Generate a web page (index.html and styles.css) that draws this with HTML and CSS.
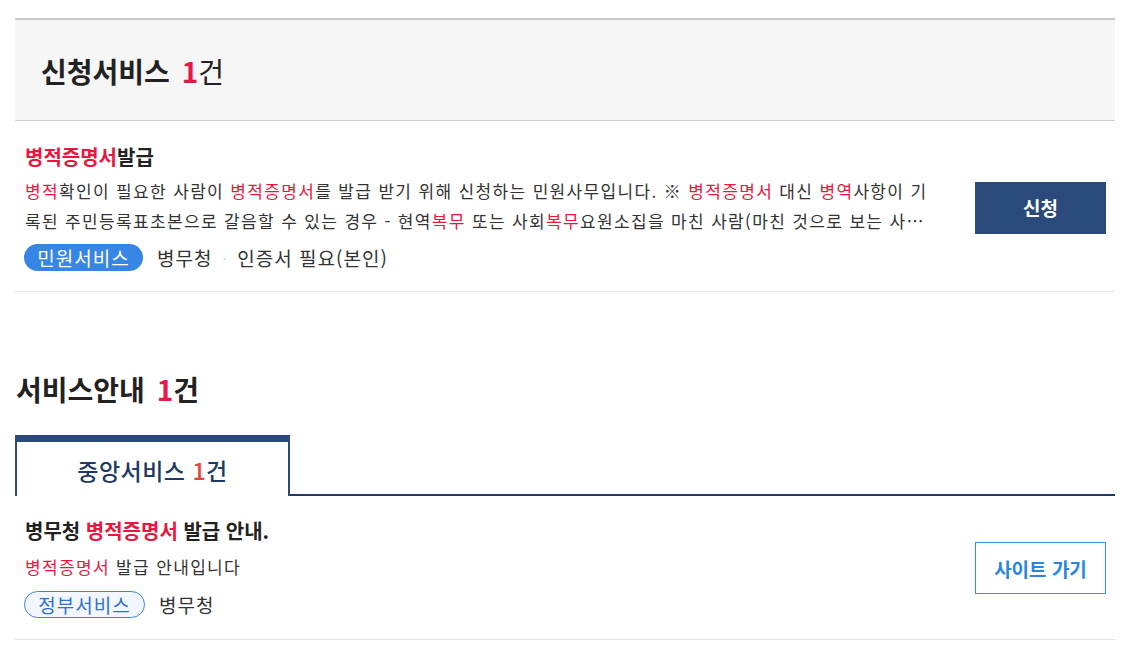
FILE: index.html
```html
<!DOCTYPE html>
<html lang="ko">
<head>
<meta charset="utf-8">
<link rel="stylesheet" href="styles.css">
</head>
<body>
<div class="page">
  <section class="apply">
    <div class="apply-head">
      <h2 class="apply-title">신청서비스 <em class="count">1</em><span class="unit">건</span></h2>
    </div>
    <div class="item">
      <div class="info">
        <h3 class="item-title"><span class="hl">병적증명서</span>발급</h3>
        <p class="desc"><span class="hl">병적</span>확인이 필요한 사람이 <span class="hl">병적증명서</span>를 발급 받기 위해 신청하는 민원사무입니다. ※ <span class="hl">병적증명서</span> 대신 <span class="hl">병역</span>사항이 기록된 주민등록표초본으로 갈음할 수 있는 경우 - 현역<span class="hl">복무</span> 또는 사회<span class="hl">복무</span>요원소집을 마친 사람(마친 것으로 보는 사람을 포함한다) - 병역면제 처분을 받은 사람</p>
        <div class="tags">
          <span class="pill pill-solid">민원서비스</span>
          <span class="tag-text">병무청</span>
          <span class="sep">·</span>
          <span class="tag-text">인증서 필요(본인)</span>
        </div>
      </div>
      <a class="btn btn-solid">신청</a>
    </div>
  </section>

  <section class="guide">
    <h2 class="guide-title">서비스안내 <em class="count">1</em>건</h2>
    <div class="tabs">
      <div class="tab"><span class="tab-label">중앙서비스 <em class="tab-count">1</em>건</span></div>
    </div>
    <div class="item item-guide">
      <div class="info">
        <h3 class="item-title">병무청 <span class="hl">병적증명서</span> 발급 안내.</h3>
        <p class="desc"><span class="hl">병적증명서</span> 발급 안내입니다</p>
        <div class="tags">
          <span class="pill pill-line">정부서비스</span>
          <span class="tag-text">병무청</span>
        </div>
      </div>
      <a class="btn btn-line">사이트 가기</a>
    </div>
  </section>
</div>
</body>
</html>
```

FILE: styles.css
```css
* { box-sizing: border-box; }
html, body {
  margin: 0;
  padding: 0;
  background: #fff;
}
body {
  font-family: "Noto Sans CJK KR", "Noto Sans", sans-serif;
  color: #333;
}
.page {
  width: 1100px;
  margin-left: 15px;
  padding-top: 18px;
}
h2, h3, p { margin: 0; }
em { font-style: normal; }

.apply-head {
  background: #f6f6f6;
  border-top: 2px solid #c8c8c8;
  border-bottom: 1px solid #cfcfcf;
  height: 103px;
  display: flex;
  align-items: center;
  padding-left: 26px;
}
.apply-title {
  font-size: 28px;
  font-weight: 700;
  color: #222;
  line-height: 34px;
  padding-top: 2px;
}
.count {
  color: #e8174a;
  font-weight: 700;
  margin-left: 4px;
}
.unit { font-weight: 400; }

.item {
  display: flex;
  align-items: center;
  gap: 42px;
  padding: 23px 9px 20px 10px;
  border-bottom: 1px solid #e4e4e4;
}
.info {
  flex: 1;
  min-width: 0;
}
.item-title {
  font-size: 20px;
  font-weight: 700;
  color: #222;
  line-height: 26px;
}
.hl { color: #e8173e; }
.desc {
  margin-top: 6px;
  font-size: 17px;
  line-height: 30px;
  color: #333;
  letter-spacing: 1.35px;
  word-spacing: 0;
  display: -webkit-box;
  -webkit-line-clamp: 2;
  -webkit-box-orient: vertical;
  overflow: hidden;
}
.tags {
  margin-top: 8px;
  display: flex;
  align-items: center;
  height: 27px;
  font-size: 19px;
  letter-spacing: 1px;
  color: #333;
}
.pill {
  display: inline-flex;
  align-items: center;
  justify-content: center;
  height: 27px;
  border-radius: 14px;
  font-size: 19px;
  margin-left: -1px;
  margin-right: 14px;
}
.pill-solid {
  width: 119px;
  background: #3786e6;
  color: #fff;
}
.pill-line {
  width: 121px;
  border: 1px solid #3a82e0;
  background: #f2f7ff;
  color: #2f6fcf;
}
.sep {
  color: #cfcfcf;
  margin: 0 10px;
  font-size: 14px;
}
.btn {
  flex: none;
  width: 131px;
  height: 52px;
  display: flex;
  align-items: center;
  justify-content: center;
  font-size: 19px;
  font-weight: 700;
  text-decoration: none;
}
.btn-solid {
  background: #2a4a7c;
  color: #fff;
}
.btn-line {
  border: 1px solid #2b93e6;
  color: #2a86de;
}

.guide {
  margin-top: 80px;
}
.guide-title {
  font-size: 28px;
  font-weight: 700;
  color: #222;
  line-height: 34px;
  padding-left: 1px;
}
.tabs {
  margin-top: 29px;
  display: flex;
  border-bottom: 2px solid #1f3b66;
}
.tab {
  width: 275px;
  height: 61px;
  margin-bottom: -2px;
  background: #fff;
  border-top: 7px solid #2a4a7c;
  border-left: 2px solid #2a4a7c;
  border-right: 2px solid #2a4a7c;
  display: flex;
  align-items: center;
  justify-content: center;
  padding-top: 2px;
}
.tab-label {
  font-size: 23px;
  letter-spacing: 0.5px;
  color: #1c3a63;
  font-weight: 500;
}
.tab-count {
  color: #e8453c;
}
.item-guide {
  padding-top: 22px;
  padding-bottom: 21px;
}
.item-guide .desc {
  margin-top: 8px;
}
.item-guide .tags {
  margin-top: 9px;
}
```
